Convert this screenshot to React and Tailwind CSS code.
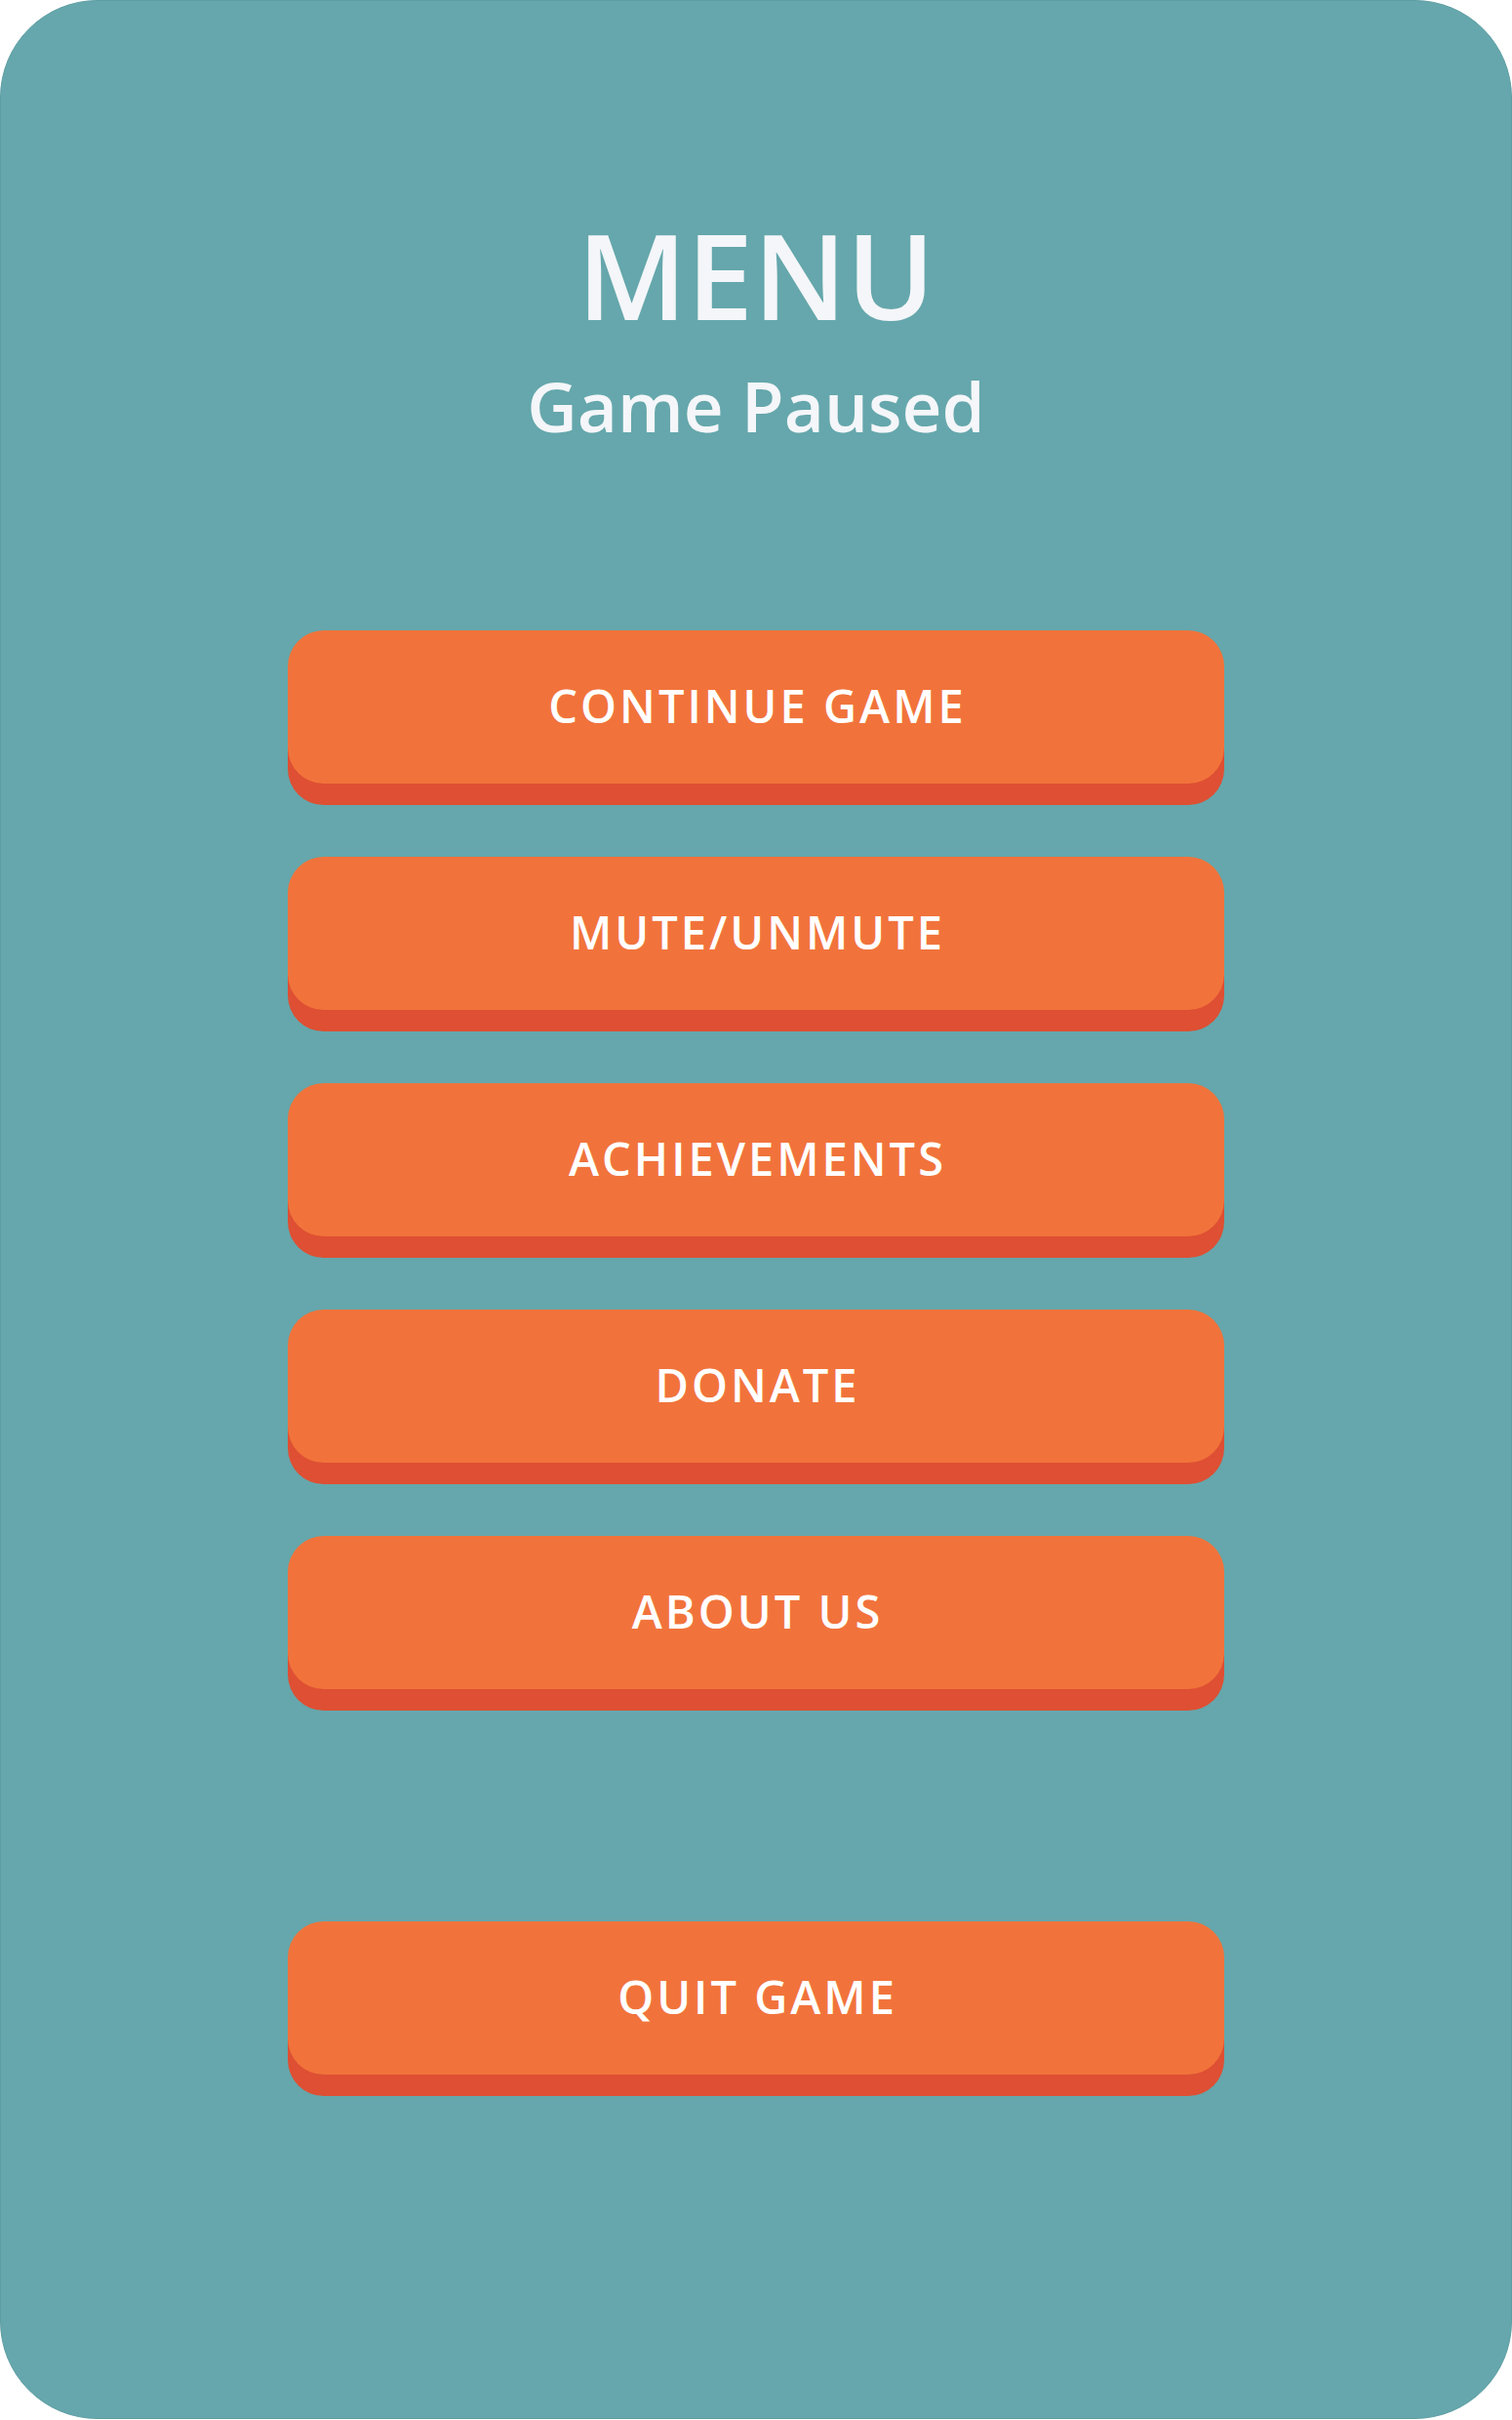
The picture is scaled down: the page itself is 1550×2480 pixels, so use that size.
import React from "react";

const items = ["CONTINUE GAME", "MUTE/UNMUTE", "ACHIEVEMENTS", "DONATE", "ABOUT US"];

function MenuButton({ label }) {
  return (
    <button className="w-[960px] h-[157px] rounded-[37px] bg-[#f1733b] shadow-[0_22px_0_#de4f33] flex items-center justify-center pl-[3px] pb-[3px] text-white text-[47px] font-semibold leading-none tracking-[3px]">
      {label}
    </button>
  );
}

export default function App() {
  return (
    <div className="w-[1550px] h-[2480px] bg-white" style={{ fontFamily: '"Open Sans", "Noto Sans", sans-serif' }}>
      <div className="h-[2479px] rounded-[100px] bg-[#65a7ac] border border-[#5d9ea3] flex flex-col items-center pt-[219px]">
        {/* Title */}
        <h1 className="text-[122px] leading-none font-semibold text-[#f4f6f9]">MENU</h1>
        <h2 className="mt-[38px] text-[71px] leading-none font-semibold text-[#f4f6f9]">Game Paused</h2>

        {/* Buttons */}
        <div className="mt-[195px] flex flex-col gap-[75px]">
          {items.map((label) => (
            <MenuButton key={label} label={label} />
          ))}
        </div>

        <div className="mt-[238px]">
          <MenuButton label="QUIT GAME" />
        </div>
      </div>
    </div>
  );
}
